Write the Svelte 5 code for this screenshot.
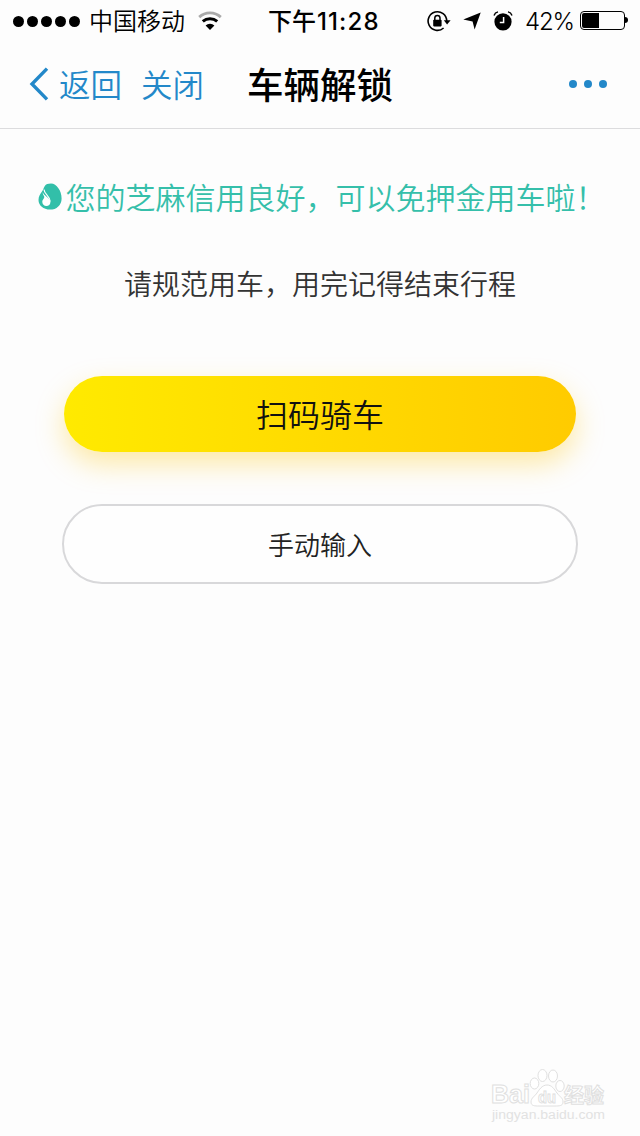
<script lang="ts">
	const signalDots = [0, 1, 2, 3, 4];
	let battery = $state(42);
</script>

<div class="screen">
	<div class="status-bar">
		<div class="status-left">
			<span class="signal">
				{#each signalDots as dot (dot)}
					<i></i>
				{/each}
			</span>
			<span class="carrier">中国移动</span>
			<svg class="wifi" width="24" height="20" viewBox="0 0 24 20" aria-hidden="true">
				<path d="M1.2 6.1a16 16 0 0 1 21.6 0" fill="none" stroke="#aaa" stroke-width="2.8" />
				<path d="M4.8 10.4a10.8 10.8 0 0 1 14.4 0" fill="none" stroke="#000" stroke-width="3" />
				<path d="M12 19l-4.4-4.6a6.4 6.4 0 0 1 8.8 0z" />
			</svg>
		</div>
		<span class="time">下午<span class="clock">11:28</span></span>
		<div class="status-right">
			<svg width="24" height="22" viewBox="0 0 24 22" aria-hidden="true">
				<path d="M19.7 11A9.3 9.3 0 1 0 16.6 18" fill="none" stroke="#000" stroke-width="1.6" />
				<path d="M16.8 10.2h6.8l-3.5 4.2z" />
				<rect x="6.2" y="9.8" width="8.4" height="6.6" rx="0.8" />
				<path d="M7.8 10V8a2.6 2.6 0 0 1 5.2 0v2" fill="none" stroke="#000" stroke-width="1.5" />
			</svg>
			<svg class="location" width="18" height="18" viewBox="0 0 18 18" aria-hidden="true">
				<path d="M17.7 0.4L11.6 17.5L9.6 9.4L0.3 7.6z" />
			</svg>
			<svg class="alarm" width="20" height="20" viewBox="0 0 20 20" aria-hidden="true">
				<circle cx="10" cy="10.8" r="8.6" />
				<path d="M1 4.4a5.4 5.4 0 0 1 4-3.5M19 4.4a5.4 5.4 0 0 0-4-3.5" fill="none" stroke="#000" stroke-width="1.4" />
				<path d="M10.6 6v5.6H6.8" fill="none" stroke="#fff" stroke-width="1.5" />
			</svg>
			<span class="percent">{battery}%</span>
			<span class="battery"><b style="width: {battery}%"></b></span>
		</div>
	</div>

	<header class="nav">
		<button type="button" class="link back">
			<svg width="20" height="34" viewBox="0 0 20 34" aria-hidden="true">
				<path d="M18 1.6L3 17l15 15.4" fill="none" stroke="currentColor" stroke-width="3.4" />
			</svg>
			<span>返回</span>
		</button>
		<button type="button" class="link close"><span>关闭</span></button>
		<h1>车辆解锁</h1>
		<button type="button" class="more" aria-label="更多"><i></i><i></i><i></i></button>
	</header>

	<main>
		<p class="credit">
			<svg width="24" height="28" viewBox="0 0 24 28" aria-hidden="true">
				<path d="M13 0.6C18.6 0.6 23.6 8 23.6 15.4C23.6 22 18.6 26.6 12 26.6C5.4 26.6 0.5 22.4 0.5 17C0.5 13.6 2 11.4 4 8.6C5.6 6.4 5.4 5 6.8 3C8 1.3 10 0.6 13 0.6z" fill="#32bfa9" />
				<path d="M6 6.4C6.2 11.4 12 13 12.2 18.4" fill="none" stroke="#fff" stroke-width="1.2" />
				<path d="M4.8 9.2C5.6 13 12.4 14.6 12.4 19C12.4 21.4 10.7 23 8.4 23C6 23 4.3 21.3 4.3 19C4.3 16.4 6.6 15.8 6.2 13.6C6 12.2 4.4 11.4 4.8 9.2z" fill="#fff" />
			</svg>
			<span>您的芝麻信用良好，可以免押金用车啦！</span>
		</p>
		<p class="hint">请规范用车，用完记得结束行程</p>
		<button type="button" class="scan">扫码骑车</button>
		<button type="button" class="manual">手动输入</button>
	</main>

	<svg class="watermark" width="118" height="58" viewBox="0 0 118 58" aria-hidden="true">
		<g fill="#fff" stroke="#e0e0e0" stroke-width="1">
			<text x="1" y="37" font-size="26" font-weight="700" textLength="39" lengthAdjust="spacingAndGlyphs">Bai</text>
			<path d="M57 19c5 0 7 4 10 8s6 5 6 9-4 4-8 4H49c-4 0-8 0-8-4s4-6 6-9 5-8 10-8z" />
			<ellipse cx="44.5" cy="17.5" rx="4.3" ry="5.5" />
			<ellipse cx="52.5" cy="9.5" rx="4.5" ry="6" />
			<ellipse cx="63" cy="10" rx="4.5" ry="6" />
			<ellipse cx="70" cy="20" rx="4.2" ry="5.5" />
			<text x="48" y="37" font-size="17" font-weight="700" textLength="18" lengthAdjust="spacingAndGlyphs">du</text>
			<text class="cjk" x="74" y="37" font-size="20" font-weight="700">经验</text>
		</g>
		<text x="2" y="53" font-size="12" fill="#e2e2e2" textLength="113" lengthAdjust="spacingAndGlyphs">jingyan.baidu.com</text>
	</svg>
</div>

<style>
	:global(body) {
		background: #fdfdfd;
	}

	.screen {
		position: relative;
		height: 1136px;
		overflow: hidden;
		background: #fdfdfd;
		color: #000;
		font-family: Inter, 'Noto Sans CJK SC', sans-serif;
	}

	button {
		padding: 0;
		border: none;
		background: none;
		font-family: inherit;
	}

	svg {
		flex: none;
		display: block;
	}

	.status-bar {
		display: grid;
		grid-template-columns: 268px 1fr auto;
		align-items: center;
		height: 40px;
		box-sizing: border-box;
		padding-right: 15px;
		font-size: 24px;
		line-height: 38px;
		white-space: nowrap;
	}

	.status-left,
	.status-right {
		display: flex;
		align-items: center;
	}

	.signal {
		display: flex;
		gap: 3px;
		margin: 1px 9px 0 13px;
	}

	.signal i {
		width: 11px;
		height: 11px;
		border-radius: 50%;
		background: #000;
	}

	.carrier,
	.time,
	.percent {
		padding-top: 3px;
	}

	.carrier {
		font-weight: 350;
	}

	.wifi {
		margin-left: 13px;
	}

	.time {
		font-size: 24px;
		font-weight: 500;
	}

	.clock {
		margin-left: 1px;
		letter-spacing: 1.1px;
	}

	.location {
		margin-left: 12px;
	}

	.alarm {
		margin-left: 12px;
	}

	.percent {
		margin-left: 12px;
		width: 55px;
		font-size: 24px;
		font-weight: 350;
		letter-spacing: -1.2px;
	}

	.battery {
		position: relative;
		width: 45px;
		height: 19px;
		box-sizing: border-box;
		padding: 1px;
		border: 1.5px solid #000;
		border-radius: 4px;
	}

	.battery b {
		display: block;
		height: 100%;
		border-radius: 2px 0 0 2px;
		background: #000;
	}

	.battery::after {
		content: '';
		position: absolute;
		top: 5px;
		right: -4px;
		width: 3px;
		height: 6px;
		border-radius: 0 3px 3px 0;
		background: #000;
	}

	.nav {
		display: flex;
		align-items: center;
		height: 89px;
		box-sizing: border-box;
		padding: 0 33px 0 29px;
		border-bottom: 1px solid #dcdcde;
	}

	.link {
		display: flex;
		align-items: center;
		color: #2388c9;
		font-size: 31.5px;
		font-weight: 350;
		line-height: 44px;
	}

	.link span {
		padding-top: 3px;
	}

	.back svg {
		margin-right: 10px;
	}

	.close {
		margin-left: 19px;
	}

	h1 {
		margin: 0 0 0 43px;
		padding-top: 4px;
		font-size: 36.5px;
		font-weight: 500;
		line-height: 44px;
	}

	.more {
		display: flex;
		gap: 7px;
		margin-left: auto;
	}

	.more i {
		width: 8px;
		height: 8px;
		border-radius: 50%;
		background: #2388c9;
	}

	main {
		display: flex;
		flex-direction: column;
		align-items: center;
	}

	.credit {
		display: flex;
		align-items: center;
		gap: 4px;
		margin: 47px 0 0;
		padding-left: 3px;
		color: #35bfaa;
		font-size: 30px;
		font-weight: 350;
		line-height: 42px;
		white-space: nowrap;
	}

	.credit span {
		padding-top: 1px;
	}

	.credit svg {
		margin-bottom: 1px;
	}

	.hint {
		margin: 46px 0 0;
		color: #333;
		font-size: 28px;
		font-weight: 350;
		line-height: 40px;
	}

	.scan {
		width: 512px;
		height: 76px;
		margin-top: 71px;
		padding-bottom: 2px;
		border-radius: 38px;
		background: linear-gradient(90deg, #ffea00, #ffcb00);
		box-shadow: 0 12px 28px rgba(255, 196, 0, 0.34);
		color: #111;
		font-size: 32px;
		font-weight: 350;
	}

	.manual {
		width: 516px;
		height: 80px;
		margin-top: 52px;
		padding-bottom: 1px;
		border: 2px solid #d8d8da;
		border-radius: 40px;
		background: #fefefe;
		color: #222;
		font-size: 26px;
		font-weight: 350;
	}

	.watermark {
		position: absolute;
		right: 32px;
		bottom: 12px;
		font-family: 'Liberation Sans', sans-serif;
	}

	.cjk {
		font-family: 'Noto Sans CJK SC', sans-serif;
	}
</style>
